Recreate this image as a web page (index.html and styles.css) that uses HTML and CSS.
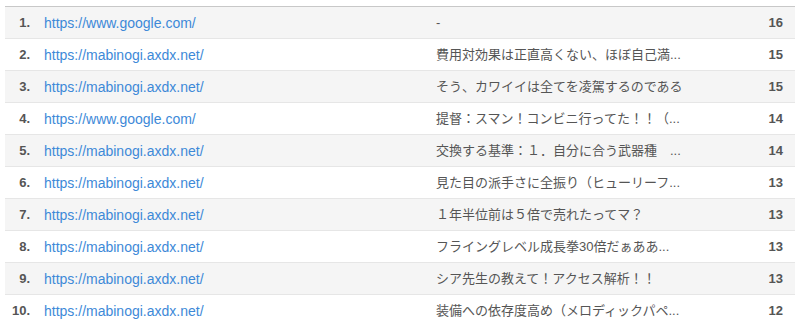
FILE: index.html
```html
<!DOCTYPE html>
<html lang="ja">
<head>
<meta charset="utf-8">
<title>Ranking</title>
<link rel="stylesheet" href="styles.css">
</head>
<body>
<table class="rank-table">
  <colgroup>
    <col class="c-rank"><col class="c-url"><col class="c-title"><col class="c-count">
  </colgroup>
  <tbody>
    <tr><td class="rank">1.</td><td class="url"><a href="#">https://www.google.com/</a></td><td class="title">-</td><td class="count">16</td></tr>
    <tr><td class="rank">2.</td><td class="url"><a href="#">https://mabinogi.axdx.net/</a></td><td class="title">費用対効果は正直高くない、ほぼ自己満...</td><td class="count">15</td></tr>
    <tr><td class="rank">3.</td><td class="url"><a href="#">https://mabinogi.axdx.net/</a></td><td class="title">そう、カワイイは全てを凌駕するのである</td><td class="count">15</td></tr>
    <tr><td class="rank">4.</td><td class="url"><a href="#">https://www.google.com/</a></td><td class="title">提督：スマン！コンビニ行ってた！！（...</td><td class="count">14</td></tr>
    <tr><td class="rank">5.</td><td class="url"><a href="#">https://mabinogi.axdx.net/</a></td><td class="title">交換する基準：１．自分に合う武器種　...</td><td class="count">14</td></tr>
    <tr><td class="rank">6.</td><td class="url"><a href="#">https://mabinogi.axdx.net/</a></td><td class="title">見た目の派手さに全振り（ヒューリーフ...</td><td class="count">13</td></tr>
    <tr><td class="rank">7.</td><td class="url"><a href="#">https://mabinogi.axdx.net/</a></td><td class="title">１年半位前は５倍で売れたってマ？</td><td class="count">13</td></tr>
    <tr><td class="rank">8.</td><td class="url"><a href="#">https://mabinogi.axdx.net/</a></td><td class="title">フライングレベル成長拳30倍だぁああ...</td><td class="count">13</td></tr>
    <tr><td class="rank">9.</td><td class="url"><a href="#">https://mabinogi.axdx.net/</a></td><td class="title">シア先生の教えて！アクセス解析！！</td><td class="count">13</td></tr>
    <tr><td class="rank">10.</td><td class="url"><a href="#">https://mabinogi.axdx.net/</a></td><td class="title">装備への依存度高め（メロディックパペ...</td><td class="count">12</td></tr>
  </tbody>
</table>
</body>
</html>
```
FILE: styles.css
```css
html, body {
  margin: 0;
  padding: 0;
  background: #fff;
}
body {
  padding: 6px 9px 0 5px;
  font-family: "Liberation Sans", Arial, "Noto Sans CJK JP", sans-serif;
  font-size: 13px;
  color: #555;
}
.rank-table {
  width: 790px;
  table-layout: fixed;
  border-collapse: collapse;
  border-top: 1px solid #c8c8c8;
}
.c-rank { width: 25px; }
.c-url { width: 398px; }
.c-count { width: 60px; }
.rank-table tr {
  border-bottom: 1px solid #e6e6e6;
}
.rank-table tr:nth-child(odd) {
  background: #f5f5f5;
}
.rank-table td {
  height: 31px;
  padding: 0;
  line-height: 16px;
  vertical-align: middle;
  white-space: nowrap;
  overflow: hidden;
}
.rank {
  text-align: right;
  font-weight: bold;
  color: #555;
}
.url {
  padding-left: 14px !important;
  font-size: 14px;
}
.url a {
  color: #3d89d8;
  text-decoration: none;
}
.title {
  padding-left: 8px !important;
  color: #555;
}
.count {
  text-align: right;
  font-weight: bold;
  padding-right: 12px !important;
}
```
